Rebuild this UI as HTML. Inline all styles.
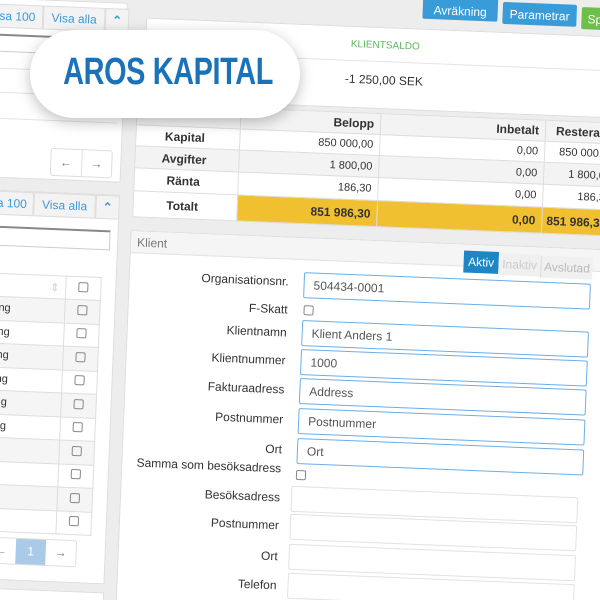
<!DOCTYPE html>
<html><head><meta charset="utf-8"><style>
*{box-sizing:border-box;margin:0;padding:0}
html{overflow:hidden;width:600px;height:600px}
body{width:600px;height:600px;overflow:hidden;background:#ededed;font-family:"Liberation Sans",sans-serif;position:relative}
#clip{position:absolute;left:0;top:0;width:600px;height:600px;overflow:hidden}
#r{position:absolute;left:-60px;top:-60px;width:720px;height:720px;transform:rotate(2.3deg);transform-origin:360px 360px;background:#ededed}
#r .a{position:absolute}
.w{background:#fff}
.bd{border:1px solid #ddd}
.btn{position:absolute;color:#fff;font-size:12px;text-align:center;line-height:20px;border-radius:2px}
.lbl{position:absolute;right:0;width:200px;text-align:right;font-size:12px;color:#333}
.inp{position:absolute;left:0;height:26px;width:287px;border:1px solid #6aaee8;border-radius:2px;background:#fff;font-size:12px;color:#555;padding-left:9px;line-height:24px}
.inp.g{border-color:#e2e2e2}
.cb{position:absolute;width:10px;height:10px;border:1px solid #888;border-radius:2px;background:#fff}
table{border-collapse:collapse}
td{border:1px solid #ddd;font-size:11px;color:#333;text-align:right;padding-right:6px}
.tab{position:absolute;font-size:12px;color:#3a9bd9;text-align:center;line-height:22px;background:#f3f3f3;border:1px solid #ddd}
</style></head><body>
<div id="clip">
<div id="r">
<div class="a" style="left:60px;top:60px;width:600px;height:600px">
 <div class="btn" style="left:411px;top:-12px;width:75px;height:26px;line-height:34px;background:#3a9bd9">Avräkning</div>
 <div class="btn" style="left:491px;top:-6px;width:74px;height:22px;line-height:24px;background:#3a9bd9">Parametrar</div>
 <div class="btn" style="left:570px;top:-4px;width:60px;height:22px;line-height:24px;background:#6cc04a;text-align:left;padding-left:6px">Spara</div>

 <div class="a w bd" style="left:135px;top:24px;width:500px;height:82px"></div>
 <div class="a" style="left:135px;top:58px;width:500px;height:1px;background:#e4e4e4"></div>
 <div class="a" style="left:330px;top:37px;width:90px;text-align:center;font-size:10px;color:#5cb85c">KLIENTSALDO</div>
 <div class="a" style="left:320px;top:70px;width:110px;text-align:center;font-size:12px;color:#333">-1 250,00 SEK</div>

 <table class="a" style="left:129px;top:110px;background:#fff;width:609px;table-layout:fixed">
  <colgroup><col style="width:104px"><col style="width:140px"><col style="width:165px"><col style="width:200px"></colgroup>
  <tr style="height:21px;background:#f3f3f3"><td></td><td style="font-weight:bold;font-size:12px">Belopp</td><td style="font-weight:bold;font-size:12px">Inbetalt</td><td style="font-weight:bold;font-size:12px;text-align:left;padding-left:10px">Resterande</td></tr>
  <tr style="height:21px"><td style="text-align:center;font-weight:bold;font-size:12px">Kapital</td><td>850 000,00</td><td>0,00</td><td style="text-align:left;padding-left:14px">850 000,00</td></tr>
  <tr style="height:22px;background:#f3f3f3"><td style="text-align:center;font-weight:bold;font-size:12px">Avgifter</td><td>1 800,00</td><td>0,00</td><td style="text-align:left;padding-left:24px">1 800,00</td></tr>
  <tr style="height:23px"><td style="text-align:center;font-weight:bold;font-size:12px">Ränta</td><td>186,30</td><td>0,00</td><td style="text-align:left;padding-left:34px">186,30</td></tr>
  <tr style="height:26px"><td style="text-align:center;font-weight:bold;font-size:12px">Totalt</td><td style="background:#f0c030;font-weight:bold;font-size:12px">851 986,30</td><td style="background:#f0c030;font-weight:bold;font-size:12px">0,00</td><td style="background:#f0c030;font-weight:bold;font-size:12px;text-align:left;padding-left:4px">851 986,30</td></tr>
 </table>

 <div class="a w bd" style="left:128px;top:237px;width:500px;height:400px"></div>
 <div class="a" style="left:129px;top:238px;width:498px;height:22px;background:#f5f5f5;border-bottom:1px solid #e2e2e2;font-size:12px;color:#777;padding-left:6px;line-height:22px">Klient</div>
 <div class="a" style="left:462px;top:244px;width:35px;height:22px;background:#1f86c6;color:#fff;font-size:12px;text-align:center;line-height:22px">Aktiv</div>
 <div class="a" style="left:497px;top:245px;width:42px;height:22px;background:#f0f0f0;color:#ccc;font-size:12px;text-align:center;line-height:22px">Inaktiv</div>
 <div class="a" style="left:539px;top:246px;width:52px;height:22px;background:#f0f0f0;color:#bbb;font-size:12px;text-align:center;line-height:22px;border-left:1px solid #ddd">Avslutad</div>

 <div class="a" style="left:88px;top:0;width:200px;height:600px">
  <div class="lbl" style="top:275px">Organisationsnr.</div>
  <div class="lbl" style="top:303px">F-Skatt</div>
  <div class="lbl" style="top:326px">Klientnamn</div>
  <div class="lbl" style="top:354px">Klientnummer</div>
  <div class="lbl" style="top:383px">Fakturaadress</div>
  <div class="lbl" style="top:413px">Postnummer</div>
  <div class="lbl" style="top:443px">Ort</div>
  <div class="lbl" style="top:462px;width:260px">Samma som besöksadress</div>
  <div class="lbl" style="top:491px">Besöksadress</div>
  <div class="lbl" style="top:519px">Postnummer</div>
  <div class="lbl" style="top:550px">Ort</div>
  <div class="lbl" style="top:579px">Telefon</div>
 </div>
 <div class="a" style="left:303px;top:0;width:300px;height:600px">
  <div class="inp" style="top:272px">504434-0001</div>
  <div class="cb" style="left:1px;top:305px"></div>
  <div class="inp" style="top:320px">Klient Anders 1</div>
  <div class="inp" style="top:349px">1000</div>
  <div class="inp" style="top:378px">Address</div>
  <div class="inp" style="top:408px">Postnummer</div>
  <div class="inp" style="top:438px">Ort</div>
  <div class="cb" style="left:0;top:470px"></div>
  <div class="inp g" style="top:486px;left:-4px">&nbsp;</div>
  <div class="inp g" style="top:514px;left:-4px">&nbsp;</div>
  <div class="inp g" style="top:544px;left:-4px">&nbsp;</div>
  <div class="inp g" style="top:573px;left:-4px">&nbsp;</div>
 </div>

 <div class="a w bd" style="left:-30px;top:10px;width:146px;height:180px"></div>
 <div class="tab" style="left:-30px;top:16px;width:62px;height:24px">Visa 100</div>
 <div class="tab" style="left:32px;top:16px;width:62px;height:24px">Visa alla</div>
 <div class="tab" style="left:94px;top:16px;width:24px;height:24px;font-weight:bold">&#8963;</div>
 <div class="a" style="left:-30px;top:46px;width:140px;height:18px;border:1px solid #ccc;border-top:2px solid #888"></div>
 <div class="a" style="left:-30px;top:80px;width:140px;height:1px;background:#e4e4e4"></div>
 <div class="a" style="left:-30px;top:104px;width:140px;height:1px;background:#e4e4e4"></div>
 <div class="a" style="left:-30px;top:130px;width:140px;height:1px;background:#e4e4e4"></div>
 <div class="a bd" style="left:45px;top:158px;width:62px;height:28px;border-radius:3px;font-size:12px;color:#777;display:flex"><span style="flex:1;text-align:center;line-height:26px;border-right:1px solid #ddd">&larr;</span><span style="flex:1;text-align:center;line-height:26px">&rarr;</span></div>

 <div class="a w bd" style="left:-30px;top:202px;width:146px;height:390px"></div>
 <div class="tab" style="left:-30px;top:203px;width:60px;height:24px">Visa 100</div>
 <div class="tab" style="left:30px;top:203px;width:62px;height:24px">Visa alla</div>
 <div class="tab" style="left:92px;top:203px;width:24px;height:24px;font-weight:bold">&#8963;</div>
 <div class="a" style="left:-30px;top:238px;width:138px;height:20px;border:1px solid #ccc;border-top:2px solid #888"></div>
 <div class="a" style="left:-30px;top:285px;width:135px">
  <table style="width:130px;background:#fff;table-layout:fixed">
   <colgroup><col style="width:95px"><col style="width:35px"></colgroup>
   <tr style="height:23px"><td style="text-align:right;color:#ccc">&#8661;</td><td style="text-align:center;padding:0"><span style="display:inline-block;width:10px;height:10px;border:1px solid #888;border-radius:2px"></span></td></tr>
   <tr style="height:23.5px;background:#f5f5f5"><td style="text-align:left;padding-left:28px">ng</td><td style="text-align:center;padding:0"><span style="display:inline-block;width:10px;height:10px;border:1px solid #888;border-radius:2px"></span></td></tr>
   <tr style="height:23.5px"><td style="text-align:left;padding-left:28px">ng</td><td style="text-align:center;padding:0"><span style="display:inline-block;width:10px;height:10px;border:1px solid #888;border-radius:2px"></span></td></tr>
   <tr style="height:23.5px;background:#f5f5f5"><td style="text-align:left;padding-left:28px">ng</td><td style="text-align:center;padding:0"><span style="display:inline-block;width:10px;height:10px;border:1px solid #888;border-radius:2px"></span></td></tr>
   <tr style="height:23.5px"><td style="text-align:left;padding-left:28px">ng</td><td style="text-align:center;padding:0"><span style="display:inline-block;width:10px;height:10px;border:1px solid #888;border-radius:2px"></span></td></tr>
   <tr style="height:23.5px;background:#f5f5f5"><td style="text-align:left;padding-left:28px">ng</td><td style="text-align:center;padding:0"><span style="display:inline-block;width:10px;height:10px;border:1px solid #888;border-radius:2px"></span></td></tr>
   <tr style="height:23.5px"><td style="text-align:left;padding-left:28px">ng</td><td style="text-align:center;padding:0"><span style="display:inline-block;width:10px;height:10px;border:1px solid #888;border-radius:2px"></span></td></tr>
   <tr style="height:23.5px;background:#f5f5f5"><td></td><td style="text-align:center;padding:0"><span style="display:inline-block;width:10px;height:10px;border:1px solid #888;border-radius:2px"></span></td></tr>
   <tr style="height:23.5px"><td></td><td style="text-align:center;padding:0"><span style="display:inline-block;width:10px;height:10px;border:1px solid #888;border-radius:2px"></span></td></tr>
   <tr style="height:23.5px;background:#f5f5f5"><td></td><td style="text-align:center;padding:0"><span style="display:inline-block;width:10px;height:10px;border:1px solid #888;border-radius:2px"></span></td></tr>
   <tr style="height:23.5px"><td></td><td style="text-align:center;padding:0"><span style="display:inline-block;width:10px;height:10px;border:1px solid #888;border-radius:2px"></span></td></tr>
  </table>
 </div>
 <div class="a bd" style="left:-5px;top:549px;width:92px;height:27px;border-radius:3px;font-size:12px;color:#777;display:flex;background:#fff"><span style="flex:1;text-align:center;line-height:25px">&larr;</span><span style="flex:1;text-align:center;line-height:25px;background:#a9cbe8;color:#fff">1</span><span style="flex:1;text-align:center;line-height:25px">&rarr;</span></div>
 <div class="a w bd" style="left:-30px;top:600px;width:146px;height:40px"></div>
</div>
</div>

<div style="position:absolute;left:30px;top:30px;width:270px;height:88px;border-radius:44px;background:#fff;box-shadow:0 4px 14px rgba(0,0,0,0.25);text-align:center">
 <span style="display:inline-block;margin-top:20px;font-size:38px;font-weight:bold;color:#1a72b8;transform:scaleX(0.76);white-space:nowrap;letter-spacing:-0.5px;line-height:44px">AROS KAPITAL</span>
</div>
</div>
</body></html>
